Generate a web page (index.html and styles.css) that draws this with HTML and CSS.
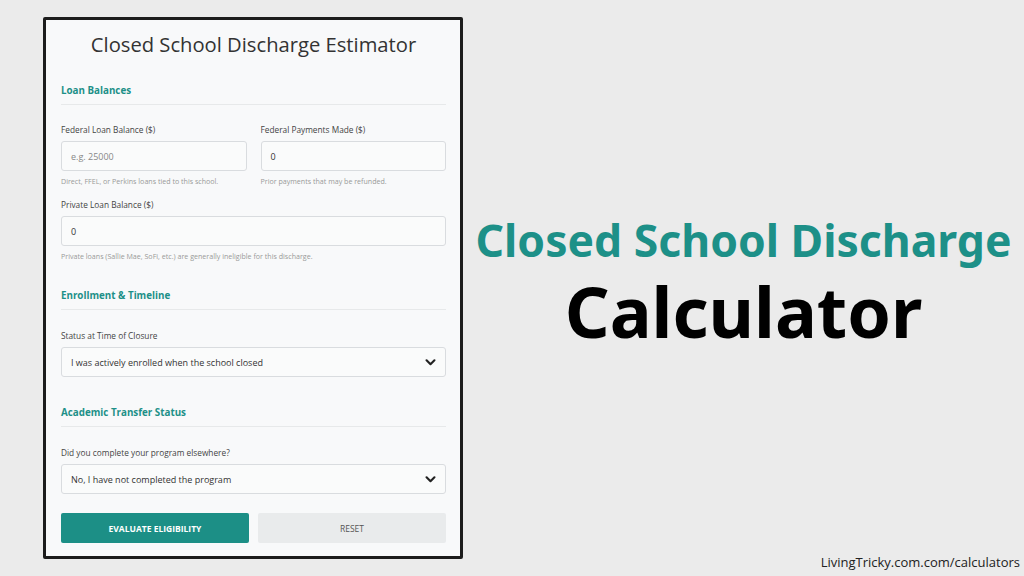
FILE: index.html
```html
<!DOCTYPE html>
<html lang="en">
<head>
<meta charset="utf-8">
<title>Closed School Discharge Calculator</title>
<link rel="stylesheet" href="styles.css">
</head>
<body>
<div class="page">
  <div class="card">
    <h1 class="card-title">Closed School Discharge Estimator</h1>

    <h2 class="section-title first">Loan Balances</h2>
    <div class="row-2">
      <div class="field">
        <label class="label">Federal Loan Balance ($)</label>
        <div class="input placeholder">e.g. 25000</div>
        <div class="help">Direct, FFEL, or Perkins loans tied to this school.</div>
      </div>
      <div class="field">
        <label class="label">Federal Payments Made ($)</label>
        <div class="input">0</div>
        <div class="help">Prior payments that may be refunded.</div>
      </div>
    </div>
    <div class="field field-tight">
      <label class="label">Private Loan Balance ($)</label>
      <div class="input">0</div>
      <div class="help">Private loans (Sallie Mae, SoFi, etc.) are generally ineligible for this discharge.</div>
    </div>

    <h2 class="section-title">Enrollment &amp; Timeline</h2>
    <div class="field">
      <label class="label">Status at Time of Closure</label>
      <div class="input select"><span>I was actively enrolled when the school closed</span>
        <svg class="chev" viewBox="0 0 12 8" width="11" height="7"><path d="M1.5 1.5 L6 6 L10.5 1.5" fill="none" stroke="#222" stroke-width="2.4" stroke-linecap="round" stroke-linejoin="round"/></svg>
      </div>
    </div>

    <h2 class="section-title wide">Academic Transfer Status</h2>
    <div class="field">
      <label class="label">Did you complete your program elsewhere?</label>
      <div class="input select"><span>No, I have not completed the program</span>
        <svg class="chev" viewBox="0 0 12 8" width="11" height="7"><path d="M1.5 1.5 L6 6 L10.5 1.5" fill="none" stroke="#222" stroke-width="2.4" stroke-linecap="round" stroke-linejoin="round"/></svg>
      </div>
    </div>

    <div class="buttons">
      <button class="btn btn-primary">EVALUATE ELIGIBILITY</button>
      <button class="btn btn-secondary">RESET</button>
    </div>
  </div>

  <div class="hero">
    <div class="hero-line1">Closed School Discharge</div>
    <div class="hero-line2">Calculator</div>
  </div>

  <div class="footer">LivingTricky.com.com/calculators</div>
</div>
</body>
</html>
```

FILE: styles.css
```css
* { box-sizing: border-box; }
html, body { margin: 0; padding: 0; }
body {
  width: 1024px;
  height: 576px;
  background: #ebebeb;
  font-family: "Open Sans", "Noto Sans", sans-serif;
  overflow: hidden;
}
.page {
  display: grid;
  grid-template-columns: 420px 1fr;
  grid-template-rows: 1fr auto;
  height: 576px;
  padding: 17px 0 0 43px;
}
.card {
  grid-row: 1 / span 2;
  width: 420px;
  height: 542px;
  background: #f8f9fa;
  border: 3px solid #1c1c1c;
  border-radius: 2px;
  padding: 12px 14px 0 15px;
  display: flex;
  flex-direction: column;
}
.card-title {
  margin: 0;
  text-align: center;
  font-size: 20.2px;
  font-weight: 400;
  color: #333;
  line-height: 24px;
}
.section-title {
  margin: 27px 0 0;
  padding-bottom: 5px;
  border-bottom: 1px solid #e7e9ea;
  font-size: 9.8px;
  font-weight: 700;
  color: #1d9088;
  line-height: 16px;
}
.section-title.wide { margin-top: 28px; }
.row-2 {
  display: grid;
  grid-template-columns: 1fr 1fr;
  gap: 14px;
}
.field { margin-top: 20px; }
.row-2 .field { margin-top: 19px; }
.field.field-tight { margin-top: 13px; }
.label {
  display: block;
  font-size: 8.3px;
  color: #444;
  line-height: 12px;
  margin-bottom: 5px;
}
.input {
  height: 30px;
  border: 1px solid #d9dcdf;
  border-radius: 3px;
  background: #fafbfb;
  font-size: 9px;
  color: #333;
  padding: 0 9px;
  display: flex;
  align-items: center;
}
.placeholder { color: #888; }
.select { justify-content: space-between; padding-right: 9px; }
.chev { display: block; }
.help {
  font-size: 7.1px;
  color: #999;
  line-height: 10px;
  margin-top: 5px;
}
.buttons {
  margin-top: 19px;
  display: grid;
  grid-template-columns: 188px 188px;
  justify-content: space-between;
}
.btn {
  height: 30px;
  border: none;
  border-radius: 2px;
  font-family: "Open Sans", "Noto Sans", sans-serif;
  font-size: 8.5px;
  font-weight: 700;
}
.btn-primary { background: #1c8f86; color: #fff; }
.btn-secondary { background: #e9ebec; color: #555; font-weight: 400; }
.hero {
  grid-column: 2;
  grid-row: 1;
  display: flex;
  flex-direction: column;
  align-items: center;
  justify-content: center;
  padding-bottom: 7px;
}
.hero-line1 {
  font-family: "Noto Sans", "Open Sans", sans-serif;
  font-weight: 700;
  font-size: 44.5px;
  color: #1d9088;
  line-height: 50px;
}
.hero-line2 {
  font-family: "Noto Sans", "Open Sans", sans-serif;
  font-weight: 700;
  font-size: 70px;
  color: #000;
  line-height: 80px;
  margin-top: 6px;
}
.footer {
  grid-column: 2;
  grid-row: 2;
  justify-self: end;
  padding: 0 4px 6px 0;
  font-size: 13px;
  color: #222;
  line-height: 15px;
}
```
